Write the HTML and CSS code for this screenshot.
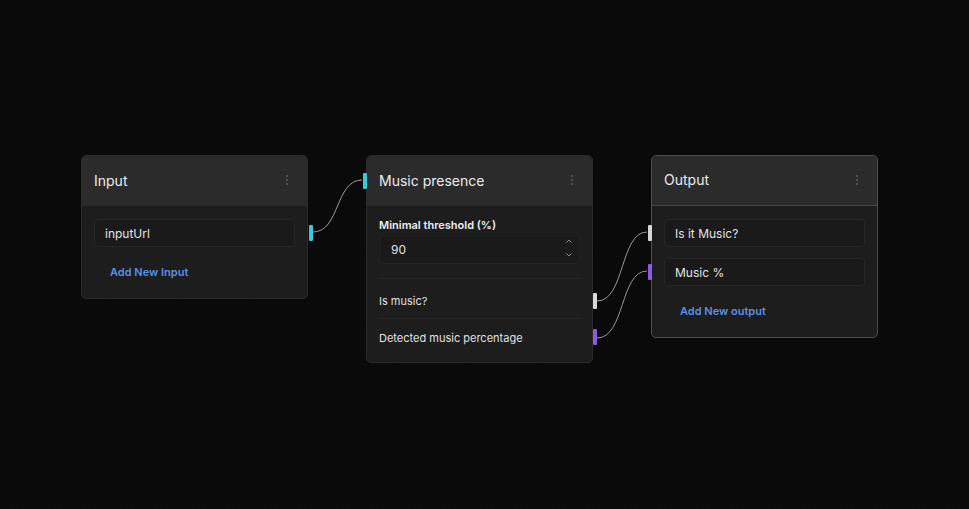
FILE: index.html
```html
<!DOCTYPE html>
<html lang="en">
<head>
    <meta charset="UTF-8">
    <meta name="viewport" content="width=device-width, initial-scale=1.0">
    <title>Flow Editor</title>
    <link rel="stylesheet" href="styles.css">
</head>
<body>

    <div class="canvas">

        <svg class="edges" width="969" height="509">
            <path d="M313 232 C 340 232, 335 180, 362 180" />
            <path d="M597 301 C 625 301, 620 232, 647 232" />
            <path d="M597 338 C 625 338, 620 271, 647 271" />
        </svg>

        <div class="node node-input">
            <div class="node-header">
                <span class="node-title">Input</span>
                <span class="kebab"><i></i><i></i><i></i></span>
            </div>
            <div class="node-body">
                <div class="field">inputUrl
                    <span class="handle handle-right cyan"></span>
                </div>
                <a class="add-link">Add New Input</a>
            </div>
        </div>

        <div class="node node-music">
            <span class="handle handle-left cyan head-handle"></span>
            <div class="node-header">
                <span class="node-title">Music presence</span>
                <span class="kebab"><i></i><i></i><i></i></span>
            </div>
            <div class="node-body body-tight">
                <div class="param">
                    <label class="param-label">Minimal threshold (%)</label>
                    <div class="number-field">
                        <span>90</span>
                        <span class="spinner">
                            <svg width="8" height="20" viewBox="0 0 8 20">
                                <path d="M1.5 4.5 L4 2 L6.5 4.5" />
                                <path d="M1.5 15.5 L4 18 L6.5 15.5" />
                            </svg>
                        </span>
                    </div>
                </div>
                <div class="out-row">Is music?
                    <span class="handle handle-right white"></span>
                </div>
                <div class="out-row">Detected music percentage
                    <span class="handle handle-right purple"></span>
                </div>
            </div>
        </div>

        <div class="node node-output selected">
            <div class="node-header">
                <span class="node-title">Output</span>
                <span class="kebab"><i></i><i></i><i></i></span>
            </div>
            <div class="node-body">
                <div class="field">Is it Music?
                    <span class="handle handle-left white"></span>
                </div>
                <div class="field">Music %
                    <span class="handle handle-left purple"></span>
                </div>
                <a class="add-link">Add New output</a>
            </div>
        </div>

    </div>

</body>
</html>
```

FILE: styles.css
```css
* {
    box-sizing: border-box;
}

body {
    margin: 0;
    font-family: 'Inter', 'Noto Sans', sans-serif;
    background-color: #0a0a0a;
    color: #e6e6e6;
}

.canvas {
    position: relative;
    width: 969px;
    height: 509px;
    overflow: hidden;
    background-color: #0a0a0a;
    background-image: radial-gradient(circle, #141414 0.7px, transparent 1px);
    background-size: 9px 9px;
}

.edges {
    position: absolute;
    left: 0;
    top: 0;
}

.edges path {
    fill: none;
    stroke: #9a9a9a;
    stroke-width: 1;
}

/* nodes sit on the free canvas */
.node {
    position: absolute;
    top: 155px;
    width: 227px;
    background: #1d1d1d;
    border: 1px solid #2a2a2a;
    border-radius: 5px;
}

.node-input { left: 81px; }
.node-music { left: 366px; }
.node-output { left: 651px; }

.node.selected {
    border-color: #4d4d4d;
}

.node-header {
    display: flex;
    align-items: center;
    justify-content: space-between;
    height: 50px;
    padding: 0 19px 2px 12px;
    background: #2b2b2b;
    border-radius: 5px 5px 0 0;
}

.selected .node-header {
    border-bottom: 1px solid #474747;
}

.node-title {
    font-size: 14px;
    color: #ececec;
}

.kebab {
    display: flex;
    flex-direction: column;
    gap: 2px;
}

.kebab i {
    width: 2px;
    height: 2px;
    border-radius: 50%;
    background: #5e5e5e;
}

.node-body {
    padding: 13px 12px 19px;
    display: flex;
    flex-direction: column;
}

.body-tight {
    padding: 12px 12px 5px;
}

.field {
    position: relative;
    height: 28px;
    display: flex;
    align-items: center;
    padding-left: 10px;
    margin-bottom: 11px;
    font-size: 12px;
    color: #e4e4e4;
    background: #1a1a1a;
    border: 1px solid #262626;
    border-radius: 4px;
}

.add-link {
    display: block;
    margin: 7px 0 0 16px;
    font-size: 11px;
    font-weight: 600;
    color: #5b8ee6;
}

.handle {
    position: absolute;
    width: 4px;
    height: 16px;
    border-radius: 1px;
}

.node-input .handle-right { right: -19px; top: 5px; }
.node-output .handle-left { left: -17px; top: 5px; }

.cyan { background: #38c9dc; }
.white { background: #d8d8d8; }
.purple { background: #8a5ee0; }

.head-handle {
    left: -4px;
    top: 17px;
}

.param {
    padding-bottom: 14px;
    border-bottom: 1px solid #262626;
}

.param-label {
    display: block;
    font-size: 11px;
    font-weight: 600;
    color: #ededed;
    margin-bottom: 3px;
}

.number-field {
    display: flex;
    align-items: center;
    justify-content: space-between;
    height: 29px;
    padding: 0 6px 0 11px;
    font-size: 12px;
    color: #e4e4e4;
    background: #1a1a1a;
    border: 1px solid #232323;
    border-radius: 4px;
}

.spinner svg path {
    fill: none;
    stroke: #8a8a8a;
    stroke-width: 1;
}

.out-row {
    position: relative;
    height: 40px;
    display: flex;
    align-items: center;
    padding-top: 5px;
    font-size: 11px;
    color: #e0e0e0;
    border-bottom: 1px solid #262626;
}

.out-row:last-child {
    height: 38px;
    padding-top: 0;
    border-bottom: none;
}

.node-music .handle-right {
    right: -17px;
    top: 14px;
}

.node-music .out-row:last-child .handle-right {
    top: 10px;
}
```
